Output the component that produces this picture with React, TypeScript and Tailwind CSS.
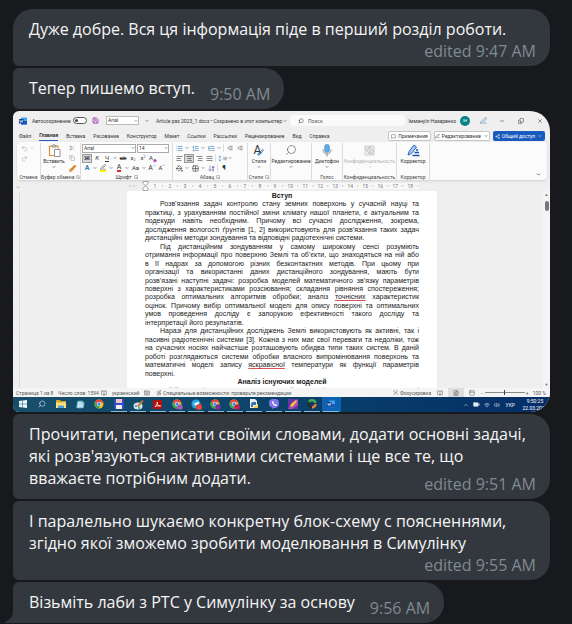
import type { ReactNode } from 'react';
import {
  AlignCenter, AlignJustify, AlignLeft, AlignRight, ArrowDownAZ, BookOpen, Brush, ChevronDown, ChevronUp,
  Copy, FileText, Focus, Grid2x2, IndentDecrease, IndentIncrease, Keyboard, List, ListOrdered, ListTree,
  MessageSquare, Minus, PaintBucket, PenLine, Redo2, Save, Scissors, Search, Share2, Copy as Restore, StickyNote,
  Undo2, Volume2, Wifi, X, BatteryMedium, Accessibility, MoveVertical, SquareArrowOutDownRight, PanelTop,
} from 'lucide-react';

type Layout = 'inline' | 'below' | 'overlap';

function Bubble({ children, time, layout, first, last }: {
  children: ReactNode; time: string; layout: Layout; first?: boolean; last?: boolean;
}) {
  const flow = {
    inline: 'flex w-fit items-end gap-[15px]',
    below: 'flex flex-col',
    overlap: 'grid',
  }[layout];
  const place = {
    inline: 'shrink-0',
    below: 'self-end',
    overlap: 'col-start-1 row-start-1 self-end justify-self-end',
  }[layout];
  return (
    <article
      className={`relative rounded-l-md rounded-r-[20px] bg-[#33383e] pt-[9px] pr-[14px] pb-[7px] pl-4 ${flow} ${first ? 'rounded-tl-[20px]' : ''} ${last ? 'rounded-bl-none' : ''}`}
    >
      {last && (
        <svg className="absolute bottom-0 -left-2 h-3 w-2" viewBox="0 0 8 12" fill="#33383e" aria-hidden="true">
          <path d="M8 0v12H.5C0 12-.5 11 1 10.400C5 9 8 5 8 0Z" />
        </svg>
      )}
      <p className={`pb-[3px] ${layout === 'overlap' ? 'col-start-1 row-start-1' : ''}`}>{children}</p>
      <time className={`leading-4 text-[#7f8a91] ${place}`}>{time}</time>
    </article>
  );
}

function Caret() {
  return (
    <span className="flex w-[6px] shrink-0 justify-center">
      <ChevronDown size={4} strokeWidth={3} />
    </span>
  );
}

function Tool({ label, children, on, wide }: { label: string; children: ReactNode; on?: boolean; wide?: boolean }) {
  return (
    <button
      type="button"
      aria-label={label}
      className={`flex h-[9px] shrink-0 items-center justify-center ${wide ? 'w-[11px]' : 'w-[10px]'} ${on ? 'border border-[#999] bg-[#d8d8d8]' : ''}`}
    >
      {children}
    </button>
  );
}

function Group({ label, width, children, launcher, dim }: {
  label: string; width: string; children: ReactNode; launcher?: boolean; dim?: boolean;
}) {
  return (
    <section className={`flex shrink-0 flex-col border-r border-[#dcdcdc] ${width}`}>
      <div className={`h-[30px] ${dim ? 'text-[#b4b4b4]' : ''}`}>{children}</div>
      <div className="flex h-[7px] items-center justify-center gap-0.5 whitespace-nowrap text-[#444]">
        <span>{label}</span>
        {launcher && <SquareArrowOutDownRight size={4} />}
      </div>
    </section>
  );
}

function BigTool({ label, icon, caret = true }: { label: string; icon: ReactNode; caret?: boolean }) {
  return (
    <button type="button" className="flex h-[30px] w-full flex-col items-center whitespace-nowrap">
      <span className="flex h-[14px] items-center">{icon}</span>
      <span className="h-[8px] leading-[8px]">{label}</span>
      {caret && <Caret />}
    </button>
  );
}

function PasteIcon() {
  return (
    <svg className="size-[13px]" viewBox="0 0 13 13" fill="none" aria-hidden="true">
      <path d="M4 2H1.500v9.500H6M8 2h2v2.500" stroke="#e0913c" strokeWidth="1.200" />
      <path d="M4 3V1.500h1a1 1 0 0 1 2 0h1V3Z" fill="#ddd" stroke="#777" strokeWidth=".7" />
      <path d="M6.500 5.500H12v7H6.500Z" fill="#fff" stroke="#777" strokeWidth=".8" />
    </svg>
  );
}

function MicIcon() {
  return (
    <svg className="h-[13px] w-[10px]" viewBox="0 0 10 13" fill="none" aria-hidden="true">
      <rect x="2.700" y=".5" width="4.600" height="8" rx="2.200" fill="#62aae3" stroke="#2d83c4" strokeWidth=".6" />
      <path d="M1 5.500c0 6 8 6 8 0M5 10v2.500" stroke="#777" strokeWidth=".8" />
    </svg>
  );
}

function SensitivityIcon() {
  return (
    <svg className="size-[11px]" viewBox="0 0 11 11" fill="none" stroke="#c4c4c4" aria-hidden="true">
      <path d="M1 1h9v9H1Z" fill="#f0f0f0" strokeWidth=".8" />
      <path d="m1 3 5 6 2-1-4-5 2-1 4 5" strokeWidth="1.200" />
    </svg>
  );
}

function EditorIcon() {
  return (
    <svg className="size-[13px]" viewBox="0 0 13 13" fill="none" aria-hidden="true">
      <path d="m1 11 1-3.500L7 1l2.500 2L4.500 9.500Z" fill="#a8cdf3" stroke="#2464c0" />
      <path d="M9 6h2M7.500 8.500H12M5.500 11.500h7" stroke="#174fae" strokeWidth="1.400" />
    </svg>
  );
}

function TitleBar() {
  return (
    <header className="flex h-[19px] items-center pr-[7px] pl-[6px]">
      <WordLogo />
      <label className="ml-[5px] flex w-[55px] items-center justify-between">
        <span className="whitespace-nowrap">Автосохранение</span>
        <input type="checkbox" className="peer sr-only" />
        <span className="flex h-[7px] w-[14px] shrink-0 items-center rounded-full border border-[#555] bg-white px-px">
          <span className="size-[3px] rounded-full bg-[#444]" />
        </span>
      </label>
      <Save className="ml-[5px] text-[#a94bb5]" size={7} strokeWidth={3} />
      <select aria-label="Шрифт" className="ml-[7px] h-[9px] w-[33px] appearance-none border border-[#bbb] bg-white px-px leading-[7px]">
        <option>Arial</option>
      </select>
      <span className="-ml-[6px]"><Caret /></span>
      <span className="ml-[5px]"><Caret /></span>
      <p className="ml-[6px] flex w-[134px] items-center whitespace-nowrap">
        Article pas 2023_1.docx • Сохранено в этот компьютер<Caret />
      </p>
      <label className="flex h-[11px] w-[115px] items-center gap-1 rounded-sm bg-[#fafafa] px-2">
        <Search size={6} className="-scale-x-100" />
        <input aria-label="Поиск" placeholder="Поиск" className="w-16 outline-none placeholder:text-[#555]" />
      </label>
      <div className="ml-auto flex items-center">
        <span className="whitespace-nowrap">Іммануїл Назаренко</span>
        <span className="ml-1 flex size-[10px] items-center justify-center rounded-full bg-[#078387] text-[4px] text-white">ІН</span>
        <button type="button" aria-label="Перо" className="ml-[10px]"><PenLine size={7} className="text-[#3c78ad]" /></button>
        <button type="button" aria-label="Свернуть" className="ml-3"><Minus size={6} /></button>
        <button type="button" aria-label="Развернуть" className="ml-[13px]"><Restore size={6} className="-scale-y-100" /></button>
        <button type="button" aria-label="Закрыть" className="ml-[13px]"><X size={6} /></button>
      </div>
    </header>
  );
}

const tabs = ['Файл', 'Главная', 'Вставка', 'Рисование', 'Конструктор', 'Макет', 'Ссылки', 'Рассылки', 'Рецензирование', 'Вид', 'Справка'];

function Tabs() {
  return (
    <nav className="flex h-3 items-center pr-[5px] pl-[6px]">
      <div className="flex gap-2">
        {tabs.map((tab) => (
          <button
            key={tab}
            type="button"
            className={`h-[10px] whitespace-nowrap leading-[9px] ${tab === 'Главная' ? 'border-b border-[#225dbe] font-bold' : ''}`}
          >
            {tab}
          </button>
        ))}
      </div>
      <div className="ml-auto flex gap-[3px]">
        <button type="button" className="flex h-[10px] w-[43px] items-center justify-center gap-0.5 rounded-xs border border-[#c5c5c5] bg-white">
          <MessageSquare size={5} />Примечания
        </button>
        <button type="button" className="flex h-[10px] w-[56px] items-center justify-center gap-0.5 rounded-xs border border-[#c5c5c5] bg-white">
          <PenLine size={6} />Редактирование<Caret />
        </button>
        <button type="button" className="flex h-[10px] w-[52px] items-center justify-center gap-0.5 rounded-xs bg-[#185abd] whitespace-nowrap text-white">
          <Share2 size={5} />Общий доступ<Caret />
        </button>
      </div>
    </nav>
  );
}

function Rule() {
  return <span className="mx-px h-2 w-px shrink-0 bg-[#ddd]" />;
}

function Ribbon() {
  return (
    <div className="mr-[3px] ml-1 flex h-[38px] rounded-sm bg-[#fbfbfb] pt-px shadow-sm">
      <Group label="Отмена" width="w-6">
        <div className="flex flex-col pl-[2px] text-[#b0b0b0]">
          <div className="flex h-[10px] items-center"><Tool label="Отменить"><Undo2 size={7} /></Tool><Caret /></div>
          <div className="flex h-[10px] items-center"><Tool label="Повторить"><Redo2 size={7} /></Tool></div>
        </div>
      </Group>
      <Group label="Буфер обмена" width="w-10" launcher>
        <div className="flex">
          <div className="w-[26px]">
            <BigTool label="Вставить" icon={<PasteIcon />} />
          </div>
          <div className="flex flex-col">
            <div className="flex h-[10px] items-center"><Tool label="Вырезать"><Scissors size={6} className="text-[#999]" /></Tool></div>
            <div className="flex h-[10px] items-center"><Tool label="Копировать"><Copy size={6} className="text-[#999]" /></Tool></div>
            <div className="flex h-[10px] items-center"><Tool label="Формат по образцу"><Brush size={7} strokeWidth={4} className="text-[#df8630]" /></Tool></div>
          </div>
        </div>
      </Group>
      <Group label="Шрифт" width="w-[92px]" launcher>
        <div className="pl-px">
          <div className="flex h-[10px] items-center gap-px">
            <div className="flex items-center">
              <select aria-label="Имя шрифта" className="h-[9px] w-[54px] appearance-none border border-[#aaa] bg-white px-px leading-[7px]"><option>Arial</option></select>
              <span className="-ml-[6px]"><Caret /></span>
            </div>
            <div className="flex items-center">
              <select aria-label="Размер шрифта" className="h-[9px] w-8 appearance-none border border-[#aaa] bg-white px-px leading-[7px]"><option>14</option></select>
              <span className="-ml-[6px]"><Caret /></span>
            </div>
          </div>
          <div className="flex h-[10px] items-center text-[6px]">
            <Tool label="Полужирный" on><b>Ж</b></Tool>
            <Tool label="Курсив"><i>К</i></Tool>
            <Tool label="Подчеркнутый"><u>Ч</u></Tool><Caret />
            <Tool label="Зачеркнутый"><s>ab</s></Tool>
            <Tool label="Подстрочный">x<span className="self-end text-[4px] text-[#2573b8]">2</span></Tool>
            <Tool label="Надстрочный">x<span className="self-start text-[4px] text-[#2573b8]">2</span></Tool>
            <Tool label="Очистить формат">A<span className="self-end text-[5px] text-[#a94bb5]">◆</span></Tool>
          </div>
          <div className="flex h-[10px] items-center text-[7px]">
            <Tool label="Эффекты"><b className="text-[#2b7fc7]">A</b></Tool><Caret />
            <Tool label="Выделение"><span className="border-b-2 border-[#fff200]"><PenLine size={6} /></span></Tool><Caret />
            <Tool label="Цвет текста"><span className="border-b-2 border-[#e32636] leading-[6px]">A</span></Tool><Caret />
            <Tool label="Регистр" wide><span className="text-[6px]">Aa</span></Tool><Caret />
            <Tool label="Крупнее">A<ChevronUp size={3} strokeWidth={4} className="self-start text-[#2573b8]" /></Tool>
            <Tool label="Мельче"><span className="text-[6px]">A</span><ChevronDown size={3} strokeWidth={4} className="self-start text-[#2573b8]" /></Tool>
          </div>
        </div>
      </Group>
      <Group label="Абзац" width="w-[75px]" launcher>
        <div className="pl-px">
          <div className="flex h-[10px] items-center">
            <Tool label="Маркеры"><List size={7} className="text-[#2573b8]" /></Tool><Caret />
            <Tool label="Нумерация"><ListOrdered size={7} className="text-[#2573b8]" /></Tool><Caret />
            <Tool label="Многоуровневый список"><ListTree size={7} className="text-[#2573b8]" /></Tool><Caret />
            <Rule />
            <Tool label="Уменьшить отступ"><IndentDecrease size={6} /></Tool>
            <Tool label="Увеличить отступ"><IndentIncrease size={6} /></Tool>
          </div>
          <div className="flex h-[10px] items-center">
            <Tool label="По левому краю"><AlignLeft size={7} /></Tool>
            <Tool label="По центру" on><AlignCenter size={7} /></Tool>
            <Tool label="По правому краю"><AlignRight size={7} /></Tool>
            <Tool label="По ширине"><AlignJustify size={7} /></Tool>
            <Rule />
            <Tool label="Интервал"><MoveVertical size={7} className="text-[#2573b8]" /><AlignJustify size={5} /></Tool><Caret />
          </div>
          <div className="flex h-[10px] items-center">
            <Tool label="Заливка"><PaintBucket size={7} /></Tool><Caret />
            <Tool label="Границы"><Grid2x2 size={7} /></Tool><Caret />
            <Tool label="Сортировка"><ArrowDownAZ size={7} className="text-[#6b4aa8]" /></Tool>
            <Rule />
            <Tool label="Знаки"><b className="text-[7px]">¶</b></Tool>
          </div>
        </div>
      </Group>
      <Group label="Стили" width="w-[23px]" launcher>
        <BigTool
          label="Стили"
          icon={<span className="flex items-end text-[12px] leading-3 text-[#333]">A<Brush size={7} strokeWidth={3} className="-ml-1 text-[#2573b8]" /></span>}
        />
      </Group>
      <Group label="" width="w-[41px]">
        <BigTool label="Редактирование" icon={<Search size={12} strokeWidth={1} className="-scale-x-100" />} />
      </Group>
      <Group label="Голос" width="w-[31px]">
        <BigTool label="Диктофон" icon={<MicIcon />} />
      </Group>
      <Group label="Конфиденциальность" width="w-[54px]" dim>
        <BigTool label="Конфиденциальность" icon={<SensitivityIcon />} />
      </Group>
      <Group label="Корректор" width="w-[33px]">
        <BigTool label="Корректор" caret={false} icon={<EditorIcon />} />
      </Group>
      <button type="button" aria-label="Свернуть ленту" className="mr-[6px] mb-[3px] ml-auto self-end"><ChevronDown size={5} strokeWidth={3} /></button>
    </div>
  );
}

const rulerMarks = Array.from({ length: 18 }, (_, i) => i + 1);

function Ruler() {
  return (
    <div className="flex h-[10px] items-center text-[4px] text-[#777]">
      <span className="w-[115px] pl-[3px] text-[5px] font-bold">∟</span>
      <span className="w-[14px] whitespace-nowrap">· ı · ı ·</span>
      <svg className="h-[10px] w-[7px]" viewBox="0 0 7 10" fill="#fff" stroke="#888" strokeWidth=".7" aria-hidden="true">
        <path d="M1 .5h5v2L3.500 4.500 1 2.500ZM1 7l2.500-2L6 7v2.500H1Z" />
      </svg>
      <div className="flex">
        {rulerMarks.map((n) => (
          <span key={n} className="flex w-[15px] items-center justify-around bg-white/60"><i>·</i><span className="text-[5px]">{n}</span><i>·</i><i>ı</i></span>
        ))}
      </div>
    </div>
  );
}

function Misspelt({ children }: { children: ReactNode }) {
  return <span className="underline decoration-[#e0525a] decoration-1 underline-offset-1">{children}</span>;
}

type Kind = 'full' | 'start' | 'end' | 'head';

const lines: { kind: Kind; text: ReactNode }[] = [
  { kind: 'head', text: 'Вступ' },
  { kind: 'start', text: 'Розв’язання задач контролю стану земних поверхонь у сучасній науці та' },
  { kind: 'full', text: 'практиці, з урахуванням постійної зміни клімату нашої планети, є актуальним та' },
  { kind: 'full', text: 'подекуди навіть необхідним. Причому всі сучасні дослідження, зокрема,' },
  { kind: 'full', text: 'дослідження вологості ґрунтів [1, 2] використовують для розв’язання таких задач' },
  { kind: 'end', text: 'дистанційні методи зондування та відповідні радіотехнічні системи.' },
  { kind: 'start', text: 'Під дистанційним зондуванням у самому широкому сенсі розуміють' },
  { kind: 'full', text: 'отримання інформації про поверхню Землі та об’єкти, що знаходяться на ній або' },
  { kind: 'full', text: 'в її надрах за допомогою різних безконтактних методів. При цьому при' },
  { kind: 'full', text: 'організації та використанні даних дистанційного зондування, мають бути' },
  { kind: 'full', text: 'розв’язані наступні задачі: розробка моделей математичного зв’язку параметрів' },
  { kind: 'full', text: 'поверхні з характеристиками розсіювання; складання рівняння спостереження;' },
  { kind: 'full', text: <>розробка оптимальних алгоритмів обробки; аналіз <Misspelt>точнісних</Misspelt> характеристик</> },
  { kind: 'full', text: 'оцінок. Причому вибір оптимальної моделі для опису поверхні та оптимальних' },
  { kind: 'full', text: 'умов проведення досліду є запорукою ефективності такого досліду та' },
  { kind: 'end', text: 'інтерпретації його результатів.' },
  { kind: 'start', text: 'Наразі для дистанційних досліджень Землі використовують як активні, так і' },
  { kind: 'full', text: 'пасивні радіотехнічні системи [3]. Кожна з них має свої переваги та недоліки, тож' },
  { kind: 'full', text: 'на сучасних носіях найчастіше розташовують обидва типи таких систем. В даній' },
  { kind: 'full', text: 'роботі розглядаються системи обробки власного випромінювання поверхонь та' },
  { kind: 'full', text: <>математичні моделі запису <Misspelt>яскравісної</Misspelt> температури як функції параметрів</> },
  { kind: 'end', text: 'поверхні.' },
  { kind: 'head', text: 'Аналіз існуючих моделей' },
  { kind: 'start', text: 'Найбільш відомими серед моделей є такі, що описують поверхні' },
];

const lineStyles: Record<Kind, string> = {
  full: '[text-align-last:justify]',
  start: 'pl-[15px] [text-align-last:justify]',
  end: '',
  head: 'text-center font-bold',
};

function Document() {
  return (
    <div className="flex h-[197px] overflow-hidden">
      <div className="mt-px w-[7px] shrink-0 border-r border-[#ddd] text-center text-[4px] leading-[15px] text-[#999]">
        {rulerMarks.slice(0, 13).map((n) => <div key={n}>·</div>)}
      </div>
      <div className="flex flex-1 justify-center pl-px">
        <div className="grid h-[204px] w-[310px] auto-rows-fr bg-white px-[18px] pt-px font-['Liberation_Sans',Arial,sans-serif] text-[7px] leading-[8px] text-[#222]">
          {lines.map((line, i) => (
            <p key={i} className={`whitespace-nowrap ${lineStyles[line.kind]}`}>{line.text}</p>
          ))}
        </div>
      </div>
      <div className="flex w-[7px] shrink-0 flex-col items-center justify-between bg-[#f4f4f4] py-px text-[4px] leading-1 text-[#666]">
        <div className="flex flex-col items-center gap-1 pt-px">
          <span>▲</span>
          <span className="h-[10px] w-1 rounded-full bg-[#777]" />
        </div>
        <span>▼</span>
      </div>
    </div>
  );
}

function StatusBar() {
  return (
    <footer className="flex h-[9px] items-center bg-[#f4f4f4] pr-1 pl-[3px] whitespace-nowrap text-[#555]">
      <span className="w-[42px]">Страница 1 из 8</span>
      <span className="w-[43px]">Число слов: 1594</span>
      <BookOpen size={6} />
      <span className="ml-[5px] w-8">украинский</span>
      <Keyboard size={6} />
      <span className="ml-[6px] flex items-center gap-px"><Accessibility size={6} />Специальные возможности: проверьте рекомендации</span>
      <span className="ml-auto flex w-11 items-center gap-0.5"><Focus size={5} />Фокусировка</span>
      <BookOpen size={6} />
      <span className="mx-[5px] flex h-[9px] w-4 items-center justify-center bg-[#dedede]"><FileText size={6} /></span>
      <PanelTop size={6} />
      <span className="ml-[6px]">−</span>
      <span className="mx-px flex h-px w-[40px] items-center justify-center bg-[#888]"><span className="h-[5px] w-px bg-[#444]" /></span>
      <span className="mr-1">+</span>
      <span>100 %</span>
    </footer>
  );
}

function WordLogo() {
  return (
    <svg className="size-[8px] shrink-0" viewBox="0 0 16 16" aria-label="Word">
      <rect x="4" y="1" width="12" height="14" rx="1" fill="#41a5ee" />
      <path d="M4 8h12v6a1 1 0 0 1-1 1H5a1 1 0 0 1-1-1Z" fill="#185abd" />
      <rect y="4" width="9" height="9" rx="1" fill="#103f91" />
      <path d="m1.500 6 1.500 5 1.500-4L6 11l1.500-5" fill="none" stroke="#fff" strokeWidth="1.200" />
    </svg>
  );
}

function Chrome({ badge }: { badge?: string }) {
  return (
    <svg className="size-[11px]" viewBox="0 0 22 22" aria-hidden="true">
      <circle cx="10" cy="10" r="9" fill="#fbc116" />
      <path d="M2.200 5.500A9 9 0 0 1 18.500 7H10L6 12Z" fill="#ea4335" />
      <path d="M2.200 5.500A9 9 0 0 0 9.500 19L13 12H6Z" fill="#34a853" />
      <circle cx="10" cy="10" r="4.300" fill="#fff" />
      <circle cx="10" cy="10" r="3.300" fill="#4285f4" />
      {badge && <circle cx="16" cy="16" r="5.500" fill={badge} />}
    </svg>
  );
}

const apps: { name: string; open?: boolean; active?: boolean; icon: ReactNode }[] = [
  { name: 'Пуск', icon: <svg className="size-2" viewBox="0 0 8 8" fill="#eef7fb"><path d="M0 1l3.500-.5v3.200H0ZM4 .4 8 0v3.700H4ZM0 4.200h3.500v3.300L0 7ZM4 4.200h4V8l-4-.5Z" /></svg> },
  { name: 'Поиск', icon: <Search size={8} className="-scale-x-100 text-[#cbe0e9]" /> },
  { name: 'Проводник', icon: <svg className="h-2 w-[10px]" viewBox="0 0 10 8"><path d="M0 0h4l1 1h5v7H0Z" fill="#d7a334" /><path d="M0 2.500h10V8H0Z" fill="#ffe17a" /><path d="M2 5.500h6V8H2Z" fill="#4ea2d8" /></svg> },
  { name: 'Блокнот', icon: <StickyNote size={9} fill="#b8e4ef" className="skew-x-[-8deg] text-[#6bb2ca]" /> },
  { name: 'Chrome', icon: <Chrome /> },
  { name: 'Сохранение', open: true, icon: <svg className="size-[10px]" viewBox="0 0 10 10"><path d="M0 0h10v10H0Z" fill="#3448c8" /><path d="M2 0h6v4H2Z" fill="#f0c2c6" /><path d="M2 6h6v4H2Z" fill="#eee" /></svg> },
  { name: 'Paint', open: true, icon: <svg className="size-[11px]" viewBox="0 0 11 11"><ellipse cx="5" cy="7" rx="4.500" ry="3.500" fill="#d6e5eb" /><path d="m4 7 5-6 1.500 1L6 8Z" fill="#cb7935" /><circle cx="3" cy="7" r="1" fill="#3489d5" /><circle cx="6" cy="9" r="1" fill="#39a66b" /></svg> },
  { name: 'Acrobat', open: true, icon: <svg className="size-[9px]" viewBox="0 0 9 9"><rect width="9" height="9" rx="1" fill="#b80f0a" /><path d="M2 7C4 5 5 2 4.300 2S4 6 7 6 3 5 2 7Z" fill="none" stroke="#fff" strokeWidth=".8" /></svg> },
  { name: 'Chrome', open: true, icon: <Chrome badge="#a956b7" /> },
  { name: 'Telegram', open: true, icon: <svg className="size-[11px]" viewBox="0 0 11 11"><circle cx="5" cy="5" r="4.500" fill="#2ca5e0" /><path d="m2 5 6-2.500-1 5-2-1.500-1 1V5.500Z" fill="#fff" /><circle cx="8" cy="8" r="3" fill="#e74a3b" /></svg> },
  { name: 'Chrome', open: true, icon: <Chrome badge="#7a2f9b" /> },
  { name: 'Chrome', open: true, icon: <Chrome badge="#c2205b" /> },
  { name: 'Python', open: true, icon: <svg className="size-[10px]" viewBox="0 0 10 10"><path d="M1 0h5l2 2v7H1Z" fill="#eee" /><path d="M3 3h4v3H4v2H2V5Z" fill="#3975a7" /><path d="M9 5v4H5V7h3V5Z" fill="#f4ce45" /></svg> },
  { name: 'Viber', open: true, icon: <svg className="size-[10px]" viewBox="0 0 10 10"><path d="M5 0c4 0 5 1 5 4.500S8 9 5 9l-2 1V8.500C1 8 0 7 0 4.500 0 1 1 0 5 0Z" fill="#8173e8" /><path d="M3 2c0 3 2 5 4.500 5l.5-1-1.500-1-1 .5L4.500 4 5 3Z" fill="#fff" /></svg> },
  { name: 'Редактор', open: true, icon: <svg className="size-[10px]" viewBox="0 0 10 10"><path d="M0 0h10v10H0Z" fill="#6935a4" /><path d="M10 0v6L4 10H0Z" fill="#b64eb1" /><path d="m2 8 1-3 5-4 1 1-4 5Z" fill="#ffc83e" /></svg> },
  { name: 'Браузер', open: true, icon: <svg className="size-[10px]" viewBox="0 0 10 10" fill="none" strokeWidth="2.500"><circle cx="5" cy="5" r="3.500" stroke="#262d31" /><path d="M2 3a3.500 3.500 0 0 1 6.500 1" stroke="#46a85b" /><path d="M8.500 5A3.500 3.500 0 0 1 5 8.500" stroke="#e97c37" /></svg> },
  { name: 'Word', open: true, active: true, icon: <WordLogo /> },
];

function Taskbar() {
  return (
    <div className="flex h-[15px] items-center bg-linear-to-r from-[#174f6b] via-[#0c426a] to-[#052d68] text-[#e4edf4]">
      <div className="flex h-full w-[328px]">
        {apps.map((app, i) => (
          <button
            key={i}
            type="button"
            aria-label={app.name}
            className={`flex h-full flex-1 items-center justify-center ${app.active ? 'bg-[#0d63b0]' : ''}`}
          >
            <span className={`flex h-[15px] w-4 items-center justify-center border-b ${app.open ? 'border-[#83bddb]' : 'border-transparent'}`}>
              {app.icon}
            </span>
          </button>
        ))}
      </div>
      <div className="ml-auto flex items-center gap-1">
        <ChevronUp size={6} />
        <BatteryMedium size={7} fill="currentColor" />
        <Wifi size={6} />
        <Volume2 size={6} />
        <span className="ml-px">УКР</span>
        <div className="ml-px flex w-[30px] flex-col items-center leading-[7px] text-white">
          <span>9:50:25</span>
          <span>22.03.2023</span>
        </div>
      </div>
    </div>
  );
}

function WordWindow() {
  return (
    <figure
      aria-label="Word"
      className="overflow-hidden rounded-l-md rounded-r-[20px] bg-[#efefef] font-[Roboto,'Noto_Sans',sans-serif] text-[5px] leading-[6px] text-[#333]"
    >
      <TitleBar />
      <Tabs />
      <Ribbon />
      <div className="pt-px"><Ruler /></div>
      <Document />
      <StatusBar />
      <Taskbar />
    </figure>
  );
}

export default function App() {
  return (
    <main className="flex min-h-screen flex-col gap-0.5 bg-[#18191d] pt-[9px] pr-[22px] pb-px pl-[13px] font-['Open_Sans','Noto_Sans',sans-serif] text-base leading-[22px] text-[#f5f5f5]">
      <Bubble layout="below" time="edited 9:47 AM" first>
        Дуже добре. Вся ця інформація піде в перший розділ роботи.
      </Bubble>
      <Bubble layout="inline" time="9:50 AM">Тепер пишемо вступ.</Bubble>
      <WordWindow />
      <Bubble layout="overlap" time="edited 9:51 AM">
        Прочитати, переписати своїми словами, додати основні задачі,<br />
        які розв'язуються активними системами і ще все те, що<br />
        вважаєте потрібним додати.
      </Bubble>
      <Bubble layout="below" time="edited 9:55 AM">
        І паралельно шукаємо конкретну блок-схему с поясненнями,<br />
        згідно якої зможемо зробити моделювання в Симулінку
      </Bubble>
      <Bubble layout="inline" time="9:56 AM" last>Візьміть лаби з РТС у Симулінку за основу</Bubble>
    </main>
  );
}
